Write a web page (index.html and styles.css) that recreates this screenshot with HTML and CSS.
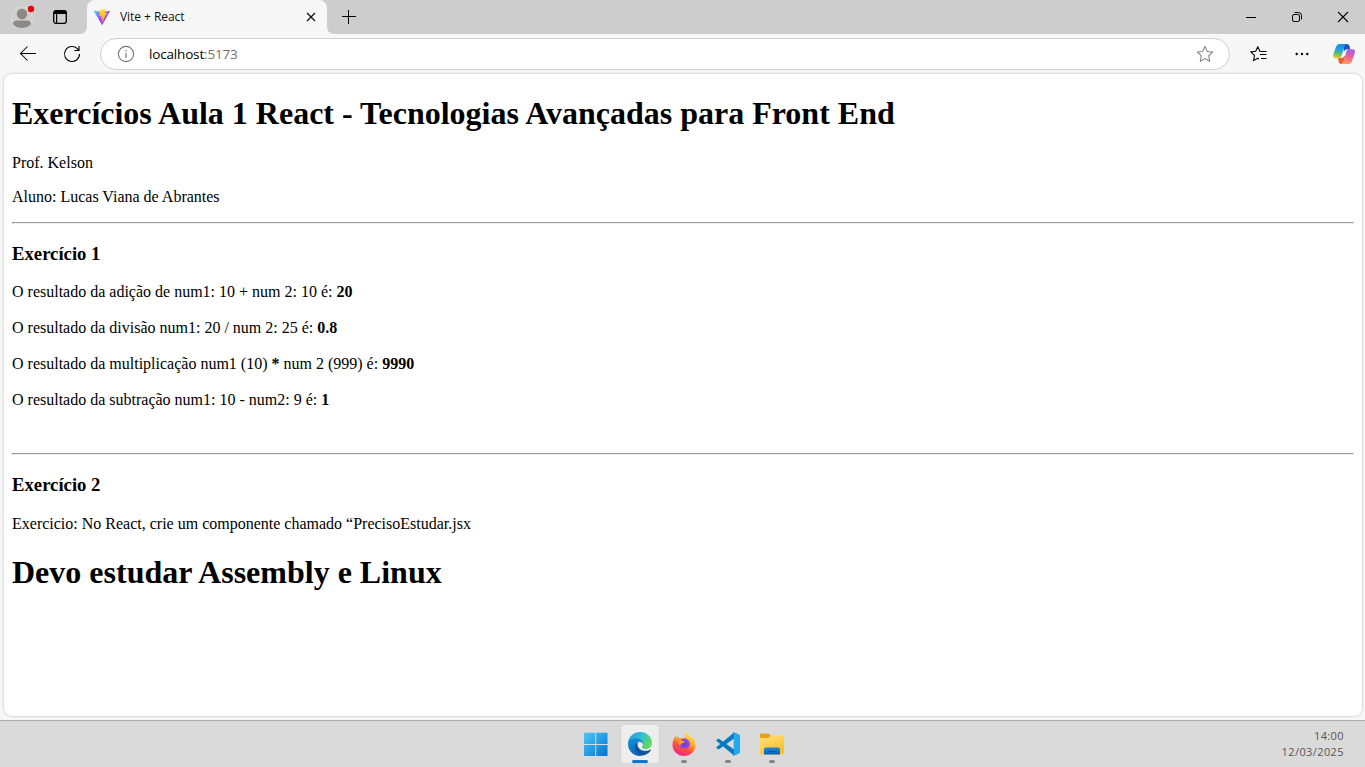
FILE: index.html
```html
<!DOCTYPE html>
<html lang="pt-BR">
<head>
<meta charset="utf-8">
<title>Vite + React</title>
<link rel="stylesheet" href="styles.css">
</head>
<body>
<div class="screen">
  <header class="tabbar">
    <div class="tabtools">
      <svg class="avatar" width="26" height="28" viewBox="0 0 26 28"><circle cx="12" cy="16.500" r="10.500" fill="#d1cfcd" stroke="#dedbd5"/><circle cx="12" cy="13" r="5.200" fill="#8b8886"/><path d="M3 23C3 20.500 4.800 19.500 7 19.500h10c2.200 0 4 1 4 3.500C18.800 25.700 15.500 27 12 27S5.200 25.700 3 23z" fill="#8b8886"/><circle cx="21" cy="8" r="3.200" fill="#e3060d"/></svg>
      <svg class="workspaces" width="16" height="16" viewBox="0 0 16 16"><rect x="1.700" y="1.700" width="12.600" height="12.600" rx="2.200" fill="none" stroke="#000" stroke-width="1.300"/><path d="M1.500 5V3.500q0-2 2-2h9q2 0 2 2V5z"/><path d="M4.600 5v9" stroke="#000" stroke-width="1.200"/></svg>
    </div>
    <div class="tab">
      <svg width="16" height="16" viewBox="0 0 32 32"><defs><linearGradient id="vp" x1="0" y1="0" x2=".7" y2="1"><stop stop-color="#41d1ff"/><stop offset=".6" stop-color="#a546fe"/><stop offset="1" stop-color="#bd34fe"/></linearGradient><linearGradient id="vy" x1=".5" y1="0" x2=".6" y2="1"><stop stop-color="#ffdd35"/><stop offset="1" stop-color="#ffa800"/></linearGradient></defs><path fill="url(#vp)" d="M31.800 5.200 17 31.200a1 1 0 0 1-1.800 0L.2 5.200a1 1 0 0 1 1.100-1.600L16 6.200l14.700-2.600a1 1 0 0 1 1.100 1.600z"/><path fill="url(#vy)" d="m23 .1-10.800 2.100a.5.5 0 0 0-.4.4l-.7 11.200c0 .3.200.5.5.5l3-.7c.3-.1.500.2.500.5l-.9 4.400c-.1.300.2.600.5.500l1.900-.6c.3-.1.600.2.500.5l-1.400 6.900c-.1.400.500.700.700.300l9.400-18c.200-.3-.1-.7-.5-.6l-3.200.6c-.3.100-.6-.2-.5-.5L23.500.6c.1-.3-.2-.6-.5-.5z"/></svg>
      <span class="tabtitle">Vite + React</span>
      <svg class="tabclose" width="10" height="10" viewBox="0 0 10 10"><path d="m1 1 8 8M9 1 1 9" stroke="#111" stroke-width="1.250"/></svg>
    </div>
    <svg class="newtab" width="14" height="14" viewBox="0 0 14 14"><path d="M0 6.500h14M6.500 0v14" stroke="#000"/></svg>
    <div class="window-controls">
      <svg width="46" height="34" viewBox="0 0 46 34"><path d="M19 17.500h10" stroke="#000"/></svg>
      <svg width="46" height="34" viewBox="0 0 46 34"><rect x="19.500" y="14.500" width="7" height="7" rx="1.500" fill="none" stroke="#000"/><path d="M21.500 12.500h4q3 0 3 3v4" fill="none" stroke="#000"/></svg>
      <svg width="46" height="34" viewBox="0 0 46 34"><path d="m19 12 10 10m0-10L19 22" stroke="#000" stroke-width="1.100"/></svg>
    </div>
  </header>

  <nav class="toolbar">
    <svg class="back" width="18" height="16" viewBox="0 0 18 16"><path d="M17 7.500H1.500M8.500 .5l-7 7 7 7" fill="none" stroke="#000" stroke-width="1.050"/></svg>
    <svg class="reload" width="18" height="18" viewBox="0 0 18 18"><path d="M16.500 9a7.500 7.500 0 1 1-2.200-5.300L16 5.400M16 1v4.500h-4.600" fill="none" stroke="#000" stroke-width="1.100"/></svg>
    <div class="address">
      <svg width="18" height="18" viewBox="0 0 18 18"><circle cx="9" cy="9" r="7.600" fill="none" stroke="#777" stroke-width="1.100"/><path d="M9 8v5M9 5v1.500" stroke="#777" stroke-width="1.200"/></svg>
      <span class="url">localhost<span class="port">:5173</span></span>
      <svg class="star" width="18" height="18" viewBox="0 0 18 18"><path d="m9 1.500 2.300 4.900 5.300.7-3.900 3.700 1 5.400L9 13.600l-4.700 2.600 1-5.400-3.900-3.700 5.300-.7z" fill="none" stroke="#808080" stroke-width="1.050" stroke-linejoin="round"/></svg>
    </div>
    <svg class="favorites" width="18" height="18" viewBox="0 0 18 18"><path d="M10.500 6.400H10L7.800 1.700 5.700 6.200l-4.900.7 3.700 3.500-1 5.200 4.300-2.300 1.200.7" fill="none" stroke="#000" stroke-width="1.100" stroke-linejoin="round"/><path d="M10.500 6.500h6M10 9.500h6.500M11 13.500h5.500" stroke="#000" stroke-width="1"/></svg>
    <svg class="more" width="14" height="4" viewBox="0 0 14 4"><circle cx="1.700" cy="2" r="1.200"/><circle cx="7" cy="2" r="1.200"/><circle cx="12.300" cy="2" r="1.200"/></svg>
    <svg class="copilot" width="22" height="22" viewBox="0 0 22 22"><defs><linearGradient id="ca" x1=".5" y1="0" x2=".4" y2="1"><stop stop-color="#168ce5"/><stop offset=".4" stop-color="#1ba6d8"/><stop offset=".7" stop-color="#69bd69"/><stop offset="1" stop-color="#ead32c"/></linearGradient><linearGradient id="cb" x1=".6" y1="0" x2=".4" y2="1"><stop stop-color="#9861f1"/><stop offset=".45" stop-color="#e9609f"/><stop offset="1" stop-color="#ff9b62"/></linearGradient></defs><path fill="#194fc5" d="M10.500 1h3.200q2 0 2.700 2l.9 3.200h-3.600q-2 0-2.900 2.800z"/><path fill="#f05b36" d="M5 15h4.500l3-3-2.200 7q-.5 2-2.500 2-1.500 0-2-2z"/><path fill="url(#ca)" d="M6.500 1h7q-1.500.4-2.200 2.800L8.500 13q-.7 2.500-2.500 2.500H2.800C.3 15.500-.3 13.700.4 11L3 4Q4 1 6.500 1z"/><path fill="url(#cb)" d="M15 6.200h4.500q3.300 0 2.200 4L19 18q-1 3-3.500 3H8q1.700-.2 2.500-2.700l3-10Q14 6.200 15 6.200z"/></svg>
  </nav>

  <main class="viewport">
    <h1>Exercícios Aula 1 React - Tecnologias Avançadas para Front End</h1>
    <p>Prof. Kelson</p>
    <p>Aluno: Lucas Viana de Abrantes</p>
    <hr>
    <h3>Exercício 1</h3>
    <div>O resultado da adição de num1: 10 + num 2: 10 é: <b>20</b><br><br>
    O resultado da divisão num1: 20 / num 2: 25 é: <b>0.8</b><br><br>
    O resultado da multiplicação num1 (10) <b>*</b> num 2 (999) é: <b>9990</b><br><br>
    O resultado da subtração num1: 10 - num2: 9 é: <b>1</b><br><br><br></div>
    <hr>
    <h3>Exercício 2</h3>
    <p>Exercicio: No React, crie um componente chamado “PrecisoEstudar.jsx</p>
    <h1>Devo estudar Assembly e Linux</h1>
  </main>

  <footer class="taskbar">
    <div class="apps">
      <div class="app"><svg width="24" height="24" viewBox="0 0 24 24"><defs><linearGradient id="wg" gradientUnits="userSpaceOnUse" x1="0" y1="0" x2="24" y2="24"><stop stop-color="#4fc8f5"/><stop offset="1" stop-color="#0072d2"/></linearGradient></defs><path fill="url(#wg)" d="M0 .7h11.200V12H0zM12.200.7H23.500V12H12.200zM0 13h11.200v11H0zM12.200 13h11.300v11H12.200z"/></svg></div>
      <div class="app active"><svg width="24" height="24" viewBox="0 0 24 24"><defs><linearGradient id="eg" x1="0" y1=".2" x2="1" y2=".6"><stop stop-color="#1c9de0"/><stop offset=".5" stop-color="#30c0d0"/><stop offset="1" stop-color="#65db57"/></linearGradient><linearGradient id="eb" x1="0" y1="0" x2=".3" y2="1"><stop stop-color="#1792dc"/><stop offset="1" stop-color="#0868bd"/></linearGradient></defs><path fill="url(#eg)" d="M0 11C.8 4 6 0 12 0c7 0 12 5 12 10.700 0 4-3 6.300-6.500 6.300-3 0-4.200-1-3.400-2.200 2.600-4-1.100-7.300-5.300-7.300C4 7.500 1 9.500 0 11z"/><path fill="url(#eb)" d="M0 12c0-4 4-5.800 8.200-5.800 4 0 7 2.800 7 6-1-2-3-3-5-2-3 1.500-3.400 5-1.800 8C9.500 20.500 12 22.500 14.500 23.600 7 25.200 0 20 0 12z"/><path fill="#11549b" d="M10.500 10C7.400 11.300 6 14 7.200 17.500 8.800 22.500 13 24.500 17 23c2.600-1 4.700-2.800 5.800-4.700.3-.6-.2-.9-.8-.6-6 2.900-11-.1-12.200-3.500-.5-1.500-.3-3 .7-4.200z"/></svg><i class="running"></i></div>
      <div class="app"><svg width="24" height="24" viewBox="0 0 24 24"><defs><linearGradient id="fg" x1=".8" y1="0" x2=".3" y2="1"><stop stop-color="#fff04c"/><stop offset=".35" stop-color="#ffb829"/><stop offset=".65" stop-color="#ff513f"/><stop offset="1" stop-color="#f0238b"/></linearGradient><radialGradient id="fp"><stop stop-color="#6337d2"/><stop offset="1" stop-color="#a14ce5"/></radialGradient></defs><path fill="url(#fg)" d="M12.800 4.500C12.500 2.500 13.500.8 15 0c.2 2.700 2 3.500 3.500 5 .6.500.8 1 1 1.500L20 5c2.400 2.500 3.500 5.300 3.500 8.500C23.300 19.700 18.400 24 12 24 5.400 24 .5 19 .5 13c0-4 1.500-7.500 3.500-9.500L4.300 6l2-2L7 6.200c1.800-.6 4-.7 5.800 0z"/><circle cx="12.300" cy="12" r="5.700" fill="url(#fp)"/><path fill="#ff9a22" d="M3.500 7.500c3.200-1.700 5.200-.5 6.200 1.200l3 .5c0 1.500-2 2-3.500 2.500-.8.400-1 1.300-.7 2.200-1.500-.7-2.200-2-2-3.800z"/><path fill="#ff4b38" d="M5.500 10.500c.5 3.500 2 5.500 4.500 6 2.700.6 4-.8 5.300-1-.5 2.500-2 3.500-5 3.300-4.500-.2-7-4.200-4.800-8.300z"/></svg><i class="running"></i></div>
      <div class="app"><svg width="24" height="24" viewBox="0 0 24 24"><path fill="#0879bc" d="M0 8.500 1.800 7Q2.500 6.500 3.300 7L18 17.500v6z"/><path fill="#087bc1" d="M0 15.500 1.800 17q.7.500 1.500 0L18 6.500V.5z"/><path fill="#23a8f2" d="M17.500 0 23 2.600q1 .5 1 1.600v15.600q0 1.100-1 1.600L17.500 24q-.8.300-1.500-.4 1.500.6 1.700-1.200V1.600Q17.500-.2 16 .4q.7-.7 1.500-.4z"/></svg><i class="running"></i></div>
      <div class="app"><svg width="24" height="24" viewBox="0 0 24 24"><defs><linearGradient id="fo" x1="0" y1="0" x2=".5" y2="1"><stop stop-color="#ffe17a"/><stop offset="1" stop-color="#fdbf2c"/></linearGradient><linearGradient id="fb" x1="0" y1="0" x2="0" y2="1"><stop stop-color="#1d87db"/><stop offset="1" stop-color="#0862ad"/></linearGradient></defs><path fill="#e5a313" d="M0 7V3.100Q0 1.500 1.600 1.500h5.900q1 0 1.800.8l2.300 2.400L9 7z"/><path fill="url(#fo)" d="M0 6h7.500q1 0 1.700-.7L10.500 4q.7-.8 1.800-.8h10.200Q24 3.200 24 4.700v16.300q0 1.500-1.500 1.500h-21Q0 22.500 0 21z"/><path fill="url(#fb)" d="M4 22.500v-5Q4 15.500 6 15.500h12q2 0 2 2v5z"/><path d="M8 19.500h8" stroke="#0a5498" stroke-width="1"/></svg><i class="running"></i></div>
    </div>
    <div class="clock"><span>14:00</span><span>12/03/2025</span></div>
  </footer>
</div>
</body>
</html>
```
FILE: styles.css
```css
* { box-sizing: border-box; }
body { margin: 0; overflow: hidden; }
svg { display: block; flex-shrink: 0; }

.screen {
  width: 1365px;
  height: 767px;
  display: flex;
  flex-direction: column;
  background: #f7f7f7;
  font-family: "Open Sans", "Noto Sans", sans-serif;
}

.tabbar {
  flex: 0 0 34px;
  display: flex;
  align-items: center;
  background: #f7f7f7;
}
.tabtools {
  width: 87px;
  height: 34px;
  display: flex;
  align-items: center;
  padding-left: 10px;
  background: #cdcdcd;
  border-bottom-right-radius: 7px;
}
.avatar { margin-bottom: 4px; }
.workspaces { margin-left: 16px; }
.tab {
  width: 240px;
  height: 34px;
  display: flex;
  align-items: center;
  padding: 0 11px 0 7px;
  background: linear-gradient(#cdcdcd, #cdcdcd) top / 100% 8px no-repeat;
  position: relative;
  z-index: 0;
}
.tab::before {
  content: "";
  position: absolute;
  inset: 0;
  z-index: -1;
  background: #f7f7f7;
  border-radius: 8px 8px 0 0;
}
.tabtitle {
  margin-left: 10px;
  font-size: 12px;
  line-height: 16px;
  letter-spacing: -0.05px;
  color: #111;
}
.tabclose { margin-left: auto; }
.newtab { box-sizing: content-box; padding: 10px 0 10px 15px; background: #cdcdcd; border-bottom-left-radius: 7px; }
.window-controls {
  flex: 1;
  height: 34px;
  display: flex;
  justify-content: flex-end;
  background: #cdcdcd;
}

.toolbar {
  flex: 0 0 40px;
  display: flex;
  align-items: center;
  padding: 0 10px 0 19px;
}
.reload { margin-left: 26px; }
.address {
  width: 1130px;
  height: 32px;
  margin-left: 19px;
  padding: 0 15px 0 16px;
  display: flex;
  align-items: center;
  background: #fff;
  border: 1px solid #d0d0d0;
  border-radius: 16px;
}
.url {
  margin-left: 14px;
  font-size: 13.5px;
  letter-spacing: -0.17px;
  color: #000;
}
.port { color: #717171; }
.star { margin-left: auto; }
.favorites { margin-left: 20px; }
.more { margin-left: 27px; }
.copilot { margin-left: 24px; }

.viewport {
  flex: 0 0 642px;
  width: 1358px;
  margin-left: 4px;
  padding: 0 8px;
  display: flow-root;
  background: #fff;
  border-radius: 8px;
  box-shadow: 0 0 2px 1px rgba(0, 0, 0, 0.12);
  font: 16px/18px "Liberation Serif", serif;
  color: #000;
}
.viewport h1 { margin: 21.44px 0; font-size: 32px; line-height: 37px; }
.viewport h3 { margin: 18.72px 0; font-size: 18.72px; line-height: 22px; }
.viewport p { margin: 16px 0; }
.viewport hr {
  margin: 8px 0;
  height: 2px;
  border: 1px solid;
  border-color: #9a9a9a #eee #eee #9a9a9a;
}

.taskbar {
  flex: 0 0 47px;
  margin-top: 4px;
  display: grid;
  grid-template-columns: 1fr auto 1fr;
  background: #dadada;
  border-top: 1px solid #adadad;
}
.apps {
  grid-column: 2;
  display: flex;
  gap: 6px;
  padding: 4px 0 0 2px;
}
.app {
  width: 38px;
  height: 38px;
  display: flex;
  flex-direction: column;
  align-items: center;
  padding-top: 7px;
  border-radius: 4px;
}
.active { background: #eee; box-shadow: 0 0 1px #bbb; }
.running {
  width: 6px;
  height: 3px;
  margin-top: 4px;
  border-radius: 2px;
  background: #858585;
}
.active .running { width: 16px; background: #0878d4; }
.clock {
  grid-column: 3;
  justify-self: end;
  display: flex;
  flex-direction: column;
  align-items: flex-end;
  padding: 7px 21px 0 0;
  font-size: 11px;
  line-height: 16px;
  letter-spacing: 0.4px;
  color: #555;
}
```
